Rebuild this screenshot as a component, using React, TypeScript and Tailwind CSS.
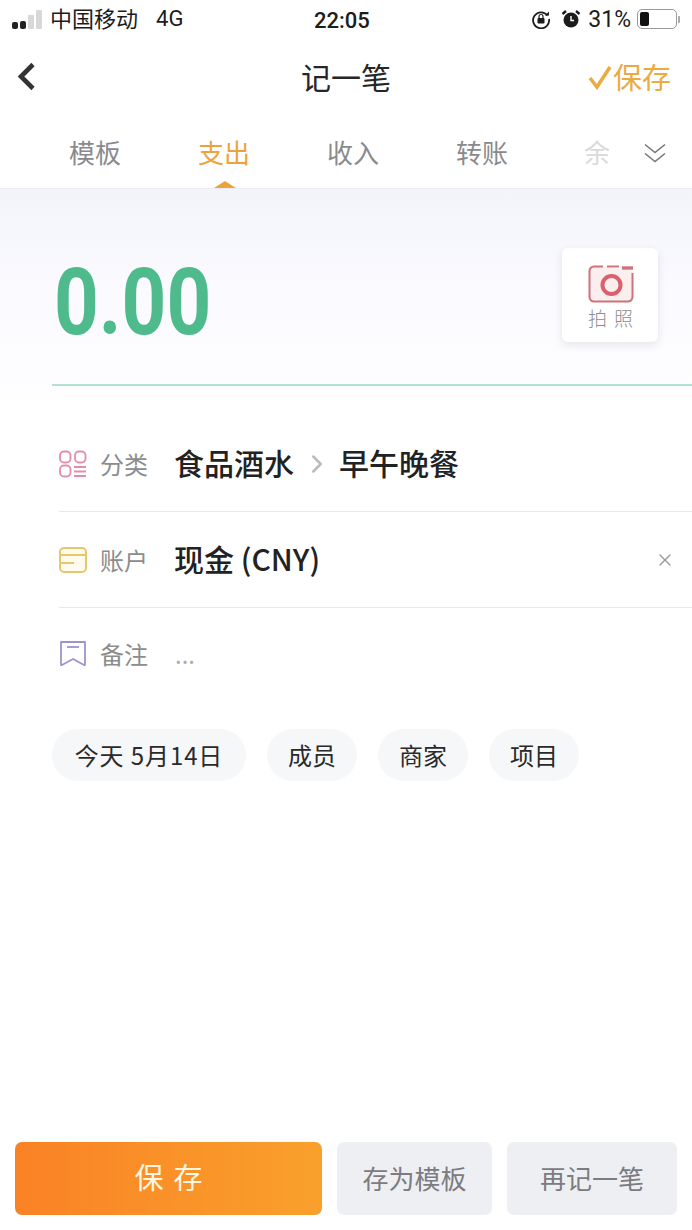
import { ChevronRight, X } from 'lucide-react';

const font = { fontFamily: '"Noto Sans CJK SC", Roboto, sans-serif' };

const tabs = [
  { name: '模板', className: 'w-[52px] text-[#8a8a8e]' },
  { name: '支出', className: 'w-[52px] text-[#eda33c]' },
  { name: '收入', className: 'w-[52px] text-[#8a8a8e]' },
  { name: '转账', className: 'w-[52px] text-[#8a8a8e]' },
];

function SignalBars() {
  return (
    <div className="flex items-end gap-[2px] h-[19px]">
      <span className="w-[6px] h-[7px] rounded-[2px] bg-[#222]" />
      <span className="w-[6px] h-[8px] rounded-[2px] bg-[#222]" />
      <span className="w-[6px] h-[14px] rounded-[1px] bg-[#d8d8d8]" />
      <span className="w-[6px] h-[19px] rounded-[1px] bg-[#d8d8d8]" />
    </div>
  );
}

function StatusBar() {
  return (
    <div className="relative flex items-center h-[38px] pl-[12px] pr-[12px] text-[#1c1c1c] text-[22px]">
      <SignalBars />
      <span className="ml-[8px] pb-[4px]">中国移动</span>
      <span className="ml-[18px] pb-[2px]" style={{ fontFamily: 'Roboto, sans-serif' }}>4G</span>
      <span className="absolute left-[314px] top-[4px] text-[22px] font-medium" style={{ fontFamily: 'Roboto, sans-serif' }}>22:05</span>
      <div className="ml-auto flex items-center">
        <svg width="20" height="20" viewBox="0 0 20 20" fill="none">
          <path d="M16.5 6.5A8 8 0 1 0 18 10" stroke="#1c1c1c" strokeWidth="1.8" />
          <path d="M14 6.5h4v-4" fill="#1c1c1c" />
          <rect x="6.5" y="9" width="7" height="5.5" rx="1" fill="#1c1c1c" />
          <path d="M8 9V7.5a2 2 0 0 1 4 0V9" stroke="#1c1c1c" strokeWidth="1.2" />
        </svg>
        <svg className="ml-[10px]" width="20" height="20" viewBox="0 0 20 20" fill="none">
          <circle cx="10" cy="11" r="7.5" fill="#1c1c1c" />
          <path d="M10 7v4.5h3" stroke="#fff" strokeWidth="1.4" />
          <path d="M1.5 5 5 2M18.5 5 15 2" stroke="#1c1c1c" strokeWidth="2.4" />
        </svg>
        <span className="ml-[7px] pt-[2px] text-[23px]" style={{ fontFamily: 'Roboto, sans-serif' }}>31%</span>
        <div className="ml-[6px] w-[40px] h-[20px] p-[2px] rounded-[5px] border border-[#9a9a9a]">
          <div className="w-[9px] h-full rounded-[2px] bg-[#111]" />
        </div>
        <span className="ml-[1px] w-[2px] h-[7px] rounded-r-[1px] bg-[#aaa]" />
      </div>
    </div>
  );
}

function NavBar() {
  return (
    <div className="relative flex items-center justify-between h-[80px] pb-[3px] pl-[17px] pr-[21px]">
      <svg width="18" height="29" viewBox="0 0 18 29" fill="none">
        <path d="M16 2.5 4 14.5l12 12" stroke="#333" strokeWidth="4.6" />
      </svg>
      <span className="absolute left-0 right-0 text-center text-[30px] text-[#262626]">记一笔</span>
      <div className="flex items-center text-[#eaab43] text-[29px]">
        <svg width="26" height="26" viewBox="0 0 26 26" fill="none">
          <path d="M3 14l7 9L23 3" stroke="#eaab43" strokeWidth="3.6" />
        </svg>
        <span>保存</span>
      </div>
    </div>
  );
}

function TabBar() {
  return (
    <div className="relative flex items-center h-[70px] pb-[3px] pl-[69px] text-[26px]">
      <div className="flex gap-[77px]">
        {tabs.map((tab) => (
          <span key={tab.name} className={tab.className}>{tab.name}</span>
        ))}
      </div>
      <span className="ml-[76px] text-[#dadada]">余</span>
      <svg className="absolute left-[644px] top-[25px]" width="22" height="20" viewBox="0 0 22 20" fill="none" stroke="#777" strokeWidth="1.6">
        <path d="M1 1.5l10 8 10-8M1 10.5l10 8 10-8" />
      </svg>
      {/* active tab marker */}
      <span className="absolute left-[214px] bottom-0 w-0 h-0 border-x-[11px] border-x-transparent border-b-[7px] border-b-[#eda33c]" />
    </div>
  );
}

function CameraButton() {
  return (
    <div className="flex flex-col items-center justify-center w-[96px] h-[94px] pt-[4px] rounded-[6px] bg-white shadow-[0_3px_8px_rgba(60,60,80,0.12)]">
      <svg className="ml-[2px]" width="46" height="38" viewBox="0 0 46 38" fill="none">
        <path d="M12 1.5H6A4.5 4.5 0 0 0 1.5 6v26A4.5 4.5 0 0 0 6 36.5h34a4.5 4.5 0 0 0 4.5-4.5V6" fill="#fbeeee" />
        <path d="M15 1.5H6A4.5 4.5 0 0 0 1.5 6v26A4.5 4.5 0 0 0 6 36.5h34a4.5 4.5 0 0 0 4.5-4.5V8" stroke="#d0727c" strokeWidth="2" />
        <path d="M19 1.5h12" stroke="#d0727c" strokeWidth="2" />
        <path d="M34 3h11" stroke="#d0727c" strokeWidth="3.4" />
        <circle cx="23.5" cy="20" r="9" stroke="#d9606c" strokeWidth="4" />
      </svg>
      <span className="mt-[3px] text-[19px] leading-[24px] tracking-[7px] pl-[8px] text-[#8c8c8c] font-light">拍照</span>
    </div>
  );
}

function CategoryIcon() {
  return (
    <svg width="28" height="28" viewBox="0 0 28 28" fill="none" stroke="#e48cab" strokeWidth="1.8">
      <rect x="1" y="1.5" width="10.5" height="11" rx="4" />
      <rect x="16" y="1.5" width="10.5" height="11" rx="4" />
      <rect x="1" y="15.5" width="10.5" height="11" rx="4" />
      <path d="M15 17h12M15 21.5h12M15 26h12" />
    </svg>
  );
}

function AccountIcon() {
  return (
    <svg width="28" height="28" viewBox="0 0 28 28" fill="none" stroke="#e9c66c" strokeWidth="2">
      <rect x="1" y="2" width="26" height="24" rx="4" fill="#fffbee" />
      <path d="M1 9h26M1 17h14" strokeWidth="1.8" />
    </svg>
  );
}

function NoteIcon() {
  return (
    <svg width="28" height="28" viewBox="0 0 28 28" fill="none" stroke="#9a94cf" strokeWidth="1.8">
      <path d="M2 2h24v22.5q0 1-1 .5l-11-6-11 6q-1 .5-1-.5z" strokeLinejoin="round" />
      <path d="M8 7h12" />
    </svg>
  );
}

function Chip({ label, className }: { label: string; className: string }) {
  return (
    <span className={`flex items-center justify-center h-[52px] rounded-full bg-[#f6f7f9] text-[24px] text-[#2a2a2a] ${className}`}>
      {label}
    </span>
  );
}

export default function App() {
  return (
    <div className="flex flex-col h-[1230px] w-[692px] bg-white overflow-hidden" style={font}>
      <StatusBar />
      <NavBar />
      <TabBar />

      <div className="flex-1 flex flex-col bg-[linear-gradient(180deg,#f3f4f9_0px,#fafaff_100px,#ffffff_230px)] border-t border-[#ececf0]">
        {/* amount */}
        <div className="relative flex items-start h-[197px] ml-[52px] border-b-2 border-[#b2e3d2]">
          <span
            className="mt-[39px] ml-[2px] text-[92px] leading-[150px] font-bold text-[#4fba8c] origin-left scale-x-[0.85]"
            style={{ fontFamily: 'Roboto, sans-serif' }}
          >
            0.00
          </span>
          <div className="absolute left-[510px] top-[59px]">
            <CameraButton />
          </div>
        </div>

        {/* form rows */}
        <div className="ml-[59px] mt-[30px]">
          <div className="flex items-center h-[96px] border-b border-[#e9e9ec]">
            <CategoryIcon />
            <span className="ml-[13px] w-[74px] text-[24px] text-[#8c8c8c]">分类</span>
            <span className="pb-[2px] text-[30px] font-medium text-[#222]">食品酒水</span>
            <ChevronRight size={30} strokeWidth={2} className="ml-[8px] text-[#bbb]" />
            <span className="pb-[2px] ml-[7px] text-[30px] font-medium text-[#222]">早午晚餐</span>
          </div>
          <div className="flex items-center h-[96px] border-b border-[#e9e9ec]">
            <AccountIcon />
            <span className="ml-[13px] w-[74px] text-[24px] text-[#8c8c8c]">账户</span>
            <span className="pb-[2px] text-[30px] font-medium text-[#222]">现金 (CNY)</span>
            <X size={20} strokeWidth={1.6} className="ml-auto mr-[17px] text-[#999]" />
          </div>
          <div className="flex items-center h-[92px]">
            <NoteIcon />
            <span className="ml-[13px] w-[75px] text-[24px] text-[#8c8c8c]">备注</span>
            <span className="text-[24px] leading-[24px] text-[#aaa]">...</span>
          </div>
        </div>

        {/* quick chips */}
        <div className="flex gap-[21px] ml-[52px] mt-[29px]">
          <Chip label="今天 5月14日" className="w-[194px] tracking-[0.9px]" />
          <Chip label="成员" className="w-[90px]" />
          <Chip label="商家" className="w-[90px]" />
          <Chip label="项目" className="w-[90px]" />
        </div>

        {/* bottom actions */}
        <div className="mt-auto mb-[15px] flex gap-[15px] px-[15px]">
          <button className="w-[307px] h-[73px] pb-[3px] rounded-[7px] bg-gradient-to-r from-[#f98225] to-[#f9a02c] text-[29px] tracking-[10px] pl-[10px] text-[#fff6e0]">
            保存
          </button>
          <button className="w-[155px] h-[73px] pb-[3px] rounded-[7px] bg-[#eeeff3] text-[26px] text-[#7b7b80]">存为模板</button>
          <button className="w-[170px] h-[73px] pb-[3px] rounded-[7px] bg-[#eeeff3] text-[26px] text-[#7b7b80]">再记一笔</button>
        </div>
      </div>
    </div>
  );
}
